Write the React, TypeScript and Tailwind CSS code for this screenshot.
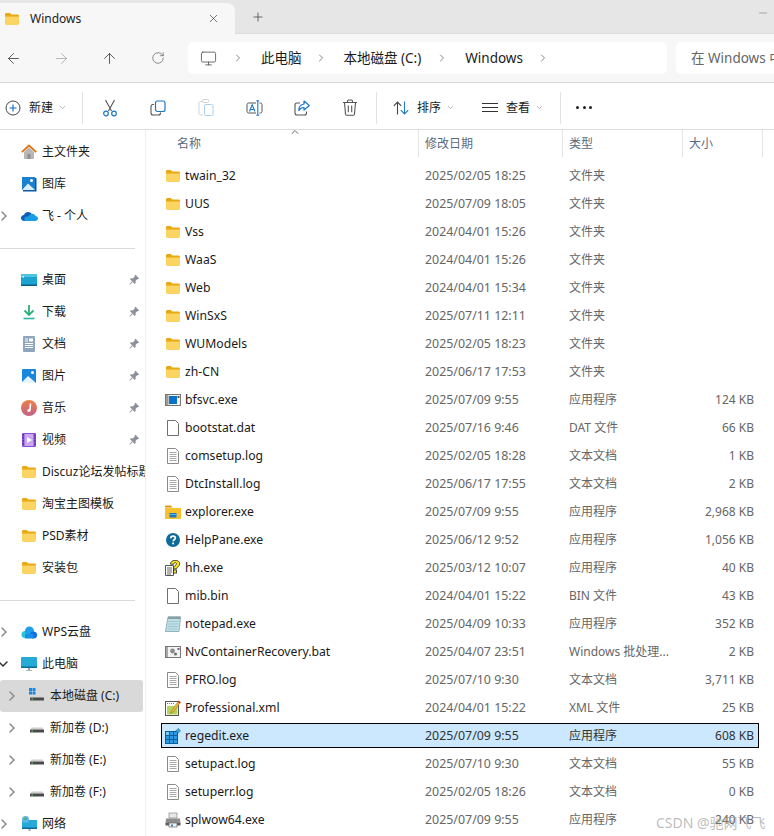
import { ArrowLeft, ArrowRight, ArrowUp, ChevronDown, ChevronRight, Plus, RotateCw, X, Minus, Monitor } from "lucide-react";
import type { ReactNode } from "react";

const font = "font-['Noto_Sans','Noto_Sans_CJK_SC',sans-serif]";

function FolderIcon({ size = 16 }: { size?: number }) {
  return (
    <svg width={size} height={size} viewBox="0 0 16 16">
      <path d="M1 3.500C1 2.700 1.600 2 2.400 2h3.400l1.600 1.500h6.200c.8 0 1.400.6 1.400 1.400V6H1z" fill="#e9a913" />
      <path d="M1 5.500h14v7.100c0 .8-.6 1.400-1.400 1.400H2.400C1.600 14 1 13.400 1 12.600z" fill="#fcd462" />
    </svg>
  );
}

function DocIcon({ lines = false }: { lines?: boolean }) {
  return (
    <svg width="16" height="16" viewBox="0 0 16 16" fill="none">
      <path d="M2.500.5h8l3 3v12h-11z" fill="#fff" stroke={lines ? "#8a8a8a" : "#6f6f6f"} />
      {lines && <path d="M4.500 4.500h7M4.500 6.500h7M4.500 8.500h7M4.500 10.500h7M4.500 12.500h7" stroke="#a8a8a8" />}
    </svg>
  );
}

function ExeIcon() {
  return (
    <svg width="16" height="16" viewBox="0 0 16 16">
      <rect x=".5" y="2.500" width="15" height="11" fill="#f2f2f2" stroke="#777" />
      <rect x="1" y="3" width="2.500" height="10" fill="#9a9a9a" />
      <rect x="4" y="4" width="8" height="8" fill="#0a73c9" />
      <rect x="12.500" y="4" width="2" height="2" fill="#555" />
    </svg>
  );
}

function ExplorerIcon() {
  return (
    <svg width="16" height="16" viewBox="0 0 16 16">
      <path d="M0 2.500C0 2 .4 1.500 1 1.500h5l1.500 2H0z" fill="#d99a0f" />
      <path d="M0 4h16v10c0 .6-.4 1-1 1H1c-.6 0-1-.4-1-1z" fill="#fbc02d" />
      <rect x="4.500" y="9" width="7" height="4.500" rx=".5" fill="#1a78c2" />
      <rect x="4.500" y="10" width="7" height="1" fill="#5cb1ea" />
    </svg>
  );
}

function HelpIcon() {
  return (
    <svg width="16" height="16" viewBox="0 0 16 16">
      <circle cx="8" cy="8" r="7" fill="#0f6a9c" />
      <path d="M5.800 6.200c0-1.300 1-2.100 2.300-2.100s2.200.8 2.200 1.900c0 1.700-2.100 1.700-2.100 3.300" fill="none" stroke="#fff" strokeWidth="1.800" />
      <rect x="7.200" y="10.500" width="1.800" height="1.800" fill="#fff" />
    </svg>
  );
}

function HhIcon() {
  return (
    <svg width="16" height="16" viewBox="0 0 16 16">
      <path d="M.5 5.500h8v10h-8z" fill="#fff" stroke="#555" />
      <path d="M2 8h5M2 10h5M2 12h5M2 14h4" stroke="#666" />
      <path d="M5.500 4.200C5.500 1.800 7.500.3 10 .3c2.600 0 4.800 1.300 4.800 3.500 0 2.800-3.300 2.900-3.300 5H8.400c0-3.300 3.200-3.500 3.200-5 0-.7-.6-1.100-1.500-1.100-1 0-1.500.6-1.500 1.500z" fill="#fbe816" stroke="#222" strokeWidth=".8" />
      <rect x="8.400" y="10" width="3.100" height="3" fill="#fbe816" stroke="#222" strokeWidth=".8" />
    </svg>
  );
}

function NotepadIcon() {
  return (
    <svg width="16" height="16" viewBox="0 0 16 16">
      <path d="M3 1h12.500l-1.500 14.500H.5z" fill="#bfe0e8" stroke="#7fa3ad" strokeWidth=".8" />
      <path d="M3 .5h12.500v2.500H3z" fill="#8c9ea5" />
      <path d="M3.500 5.500h10M3.200 8h10M2.900 10.500h10M2.600 13h10" stroke="#8fbcc9" strokeWidth=".7" />
    </svg>
  );
}

function BatIcon() {
  return (
    <svg width="16" height="16" viewBox="0 0 16 16">
      <rect x=".5" y="2.500" width="15" height="11" fill="#f4f4f4" stroke="#777" />
      <rect x="1" y="3" width="2" height="10" fill="#aaa" />
      <circle cx="7.500" cy="7" r="2.400" fill="#8b8b8b" />
      <circle cx="10.500" cy="10" r="1.600" fill="#6f6f6f" />
      <rect x="12.500" y="4" width="2" height="2" fill="#666" />
    </svg>
  );
}

function XmlIcon() {
  return (
    <svg width="16" height="16" viewBox="0 0 16 16">
      <rect x=".5" y="1.500" width="13" height="14" fill="#fff" stroke="#555" />
      <rect x="2" y="6" width="10.500" height="8.500" fill="#b6d45c" />
      <path d="M2 3.500h7" stroke="#777" strokeDasharray="1 1" />
      <path d="M5.500 13.500l1.200-3L13.600.8l2 1.400-6.900 9.500z" fill="#eeb33a" stroke="#7a5a16" strokeWidth=".4" />
      <path d="M13.600.8l2 1.400-1 1.300-2-1.400z" fill="#c9372c" />
    </svg>
  );
}

function RegIcon() {
  return (
    <svg width="16" height="16" viewBox="0 0 16 16">
      <rect x=".5" y="3.500" width="12" height="12" fill="#2a9be3" stroke="#0d5e9c" />
      <path d="M4.500 3.500v12M8.500 3.500v12M.5 7.500h12M.5 11.500h12" stroke="#0d5e9c" />
      <rect x="1" y="4" width="3" height="3" fill="#7ecbf5" />
      <path d="M13.200 .5l2.300 2.300-2.300 2.300-2.300-2.300z" fill="#4ba6dd" stroke="#1a6ea8" strokeWidth=".7" />
    </svg>
  );
}

function PrinterIcon() {
  return (
    <svg width="16" height="16" viewBox="0 0 16 16">
      <rect x="4" y="1" width="8" height="5" fill="#e8e8e8" stroke="#888" strokeWidth=".7" />
      <path d="M1 6.500h14l.5 5H.5z" fill="#8d8d8d" />
      <rect x=".5" y="11" width="15" height="2.500" fill="#5e5e5e" />
      <rect x="4" y="11" width="8" height="4" fill="#f2f2f2" stroke="#666" strokeWidth=".7" />
      <rect x="6" y="12.500" width="2" height="2" fill="#2a86c9" />
    </svg>
  );
}

function HomeIcon() {
  return (
    <svg width="16" height="16" viewBox="0 0 16 16">
      <path d="M3 8l5-4.500L13 8v6.500c0 .3-.2.500-.5.500h-9c-.3 0-.5-.2-.5-.5z" fill="#b7b7b7" />
      <rect x="6.500" y="10" width="3" height="5" fill="#8d8d8d" />
      <path d="M.8 8.200L8 1.500l7.200 6.700" fill="none" stroke="#e0730f" strokeWidth="1.800" />
    </svg>
  );
}

function GalleryIcon() {
  return (
    <svg width="16" height="16" viewBox="0 0 16 16">
      <rect x="1" y="1" width="13" height="13" fill="#1a80d0" />
      <path d="M14 2h1.500v13.500H2V14h12z" fill="#0c5aa6" />
      <circle cx="10.500" cy="4.500" r="1.500" fill="#fff" />
      <path d="M1 14l6-6.500 7 6.500z" fill="#dbeefa" />
    </svg>
  );
}

function OneDriveIcon() {
  return (
    <svg width="17" height="16" viewBox="0 0 17 16">
      <path d="M3.500 13C1.500 13 0 11.700 0 10s1.300-2.800 3-3c.6-1.900 2.200-3 4.100-3 1.600 0 3 .8 3.700 2.200L8 13z" fill="#0a5fb4" />
      <path d="M3.500 13h10.600c1.600 0 2.900-1 2.900-2.500 0-1.400-1.100-2.400-2.500-2.500-.6-1.500-2-2.300-3.600-2.200-2.300.2-3.100 2-3.900 3-1.500-.6-3.200 0-3.500 1.500-.2.900-.1 2 0 2.700z" fill="#1c9ce5" />
    </svg>
  );
}

function DesktopIcon() {
  return (
    <svg width="16" height="16" viewBox="0 0 16 16">
      <rect x="0" y="2" width="16" height="12" rx="1" fill="#1ba4cf" />
      <path d="M0 3c0-.6.400-1 1-1h14c.6 0 1 .4 1 1v2H0z" fill="#4ec3e2" />
      <rect x="0" y="12.500" width="16" height="1.500" fill="#0a5c86" />
      <rect x="1.500" y="4" width="1.500" height="1.500" fill="#fff" />
    </svg>
  );
}

function DownloadIcon() {
  return (
    <svg width="16" height="16" viewBox="0 0 16 16" fill="none">
      <path d="M8 1v9.500M3.500 6.500L8 11l4.500-4.500" stroke="#2ab27b" strokeWidth="1.800" />
      <path d="M2.500 14.500h11" stroke="#28b6a0" strokeWidth="1.600" />
    </svg>
  );
}

function DocsIcon() {
  return (
    <svg width="16" height="16" viewBox="0 0 16 16">
      <rect x="2" y="0" width="12" height="16" rx="1" fill="#8ea6bf" />
      <rect x="8" y="2.500" width="4" height="3" fill="#fff" />
      <path d="M4 3h3M4 5h3M4 7.500h8M4 9.500h8M4 11.500h8" stroke="#fff" />
    </svg>
  );
}

function PicsIcon() {
  return (
    <svg width="16" height="16" viewBox="0 0 16 16">
      <rect x="1" y="1" width="14" height="14" rx="1" fill="#1a86dc" />
      <circle cx="11.500" cy="4.500" r="1.500" fill="#fff" />
      <path d="M1 14l6-6 7 6v1H1z" fill="#e8f4fc" />
    </svg>
  );
}

function MusicIcon() {
  return (
    <svg width="16" height="16" viewBox="0 0 16 16">
      <defs>
        <linearGradient id="mus" x1="0" y1="0" x2="0" y2="1">
          <stop offset="0" stopColor="#e98145" />
          <stop offset="1" stopColor="#c3618c" />
        </linearGradient>
      </defs>
      <circle cx="8" cy="8" r="8" fill="url(#mus)" />
      <path d="M8.800 3.500h1.500L9.800 10c-.1 1.200-1 2-2 2s-1.600-.6-1.600-1.400c0-1 1-1.600 2-1.400z" fill="#fff" />
    </svg>
  );
}

function VideoIcon() {
  return (
    <svg width="16" height="16" viewBox="0 0 16 16">
      <rect x="1" y="1" width="14" height="14" rx="1" fill="#8d4fdc" />
      <rect x="3.500" y="2" width="9" height="12" fill="#c8a9ef" />
      <path d="M6 5l5 3-5 3z" fill="#fff" />
      <path d="M1.500 3h1.500M1.500 6h1.500M1.500 9h1.500M1.500 12h1.500M13 3h1.500M13 6h1.500M13 9h1.500M13 12h1.500" stroke="#3f1f86" />
    </svg>
  );
}

function WpsCloudIcon() {
  return (
    <svg width="16" height="16" viewBox="0 0 16 16">
      <circle cx="4" cy="10.500" r="3.500" fill="#29c4d6" />
      <circle cx="8.500" cy="7" r="4.500" fill="#1e9fe8" />
      <circle cx="12.500" cy="11" r="3.500" fill="#0f6fe0" />
      <rect x="4" y="10" width="8.500" height="4.500" fill="#1a8ee6" />
    </svg>
  );
}

function PcIcon() {
  return (
    <svg width="16" height="16" viewBox="0 0 16 16">
      <rect x="0" y="1" width="16" height="11" rx="1" fill="#25a9d6" />
      <rect x="0" y="10.500" width="16" height="1.500" fill="#0f6c9a" />
      <rect x="7" y="12" width="2" height="2" fill="#9aa5ab" />
      <rect x="5" y="14" width="6" height="1" fill="#aab4ba" />
    </svg>
  );
}

function DriveIcon({ system = false }: { system?: boolean }) {
  return (
    <svg width="16" height="16" viewBox="0 0 16 16">
      <path d="M1.500 9.500l1-2h11l1 2z" fill={system ? "#d6d6d6" : "#cfcfcf"} />
      <rect x="1" y="9.500" width="14" height="3" rx=".5" fill="#4a4a4a" />
      <rect x="2.500" y="10.500" width="1.500" height="1" fill="#5ee070" />
      {system && (
        <g fill="#1a86dc">
          <rect x="0" y="0" width="3" height="3" />
          <rect x="3.500" y="0" width="3" height="3" />
          <rect x="0" y="3.500" width="3" height="3" />
          <rect x="3.500" y="3.500" width="3" height="3" />
        </g>
      )}
    </svg>
  );
}

function NetworkIcon() {
  return (
    <svg width="16" height="16" viewBox="0 0 16 16">
      <rect x="1" y="4" width="15" height="9" rx=".5" fill="#25a9d6" />
      <rect x="1" y="11.500" width="15" height="1.500" fill="#0f6c9a" />
      <rect x="7.500" y="13" width="2" height="2" fill="#9aa5ab" />
      <circle cx="4.500" cy="3.500" r="3.500" fill="#5cb6e6" />
      <path d="M2.500 2.500l2-1 1.500 1-1.500 2z" fill="#4fae62" />
    </svg>
  );
}

function PinIcon() {
  return (
    <svg width="12" height="12" viewBox="0 0 12 12" fill="#8b9199">
      <path d="M7.500.8l3.700 3.700-1 .8-.7-.3-2 2 .2 2-.9.9L1.900 5.100l.9-.9 2 .2 2-2-.3-.7z" />
      <path d="M3.600 7.400L.8 11.200l3.800-2.800z" />
    </svg>
  );
}

function NewIcon() {
  return (
    <svg width="16" height="16" viewBox="0 0 16 16" fill="none">
      <circle cx="8" cy="8" r="7" stroke="#444" />
      <path d="M8 4.500v7M4.500 8h7" stroke="#0a6cc4" strokeWidth="1.100" />
    </svg>
  );
}

function CutIcon() {
  return (
    <svg width="16" height="18" viewBox="0 0 16 18" fill="none">
      <path d="M3.500 1l6 11M12.500 1l-6 11" stroke="#555" strokeWidth="1.100" />
      <circle cx="4" cy="14.500" r="2.300" stroke="#1d77c9" strokeWidth="1.200" />
      <circle cx="12" cy="14.500" r="2.300" stroke="#1d77c9" strokeWidth="1.200" />
    </svg>
  );
}

function CopyIcon() {
  return (
    <svg width="16" height="16" viewBox="0 0 16 16" fill="none">
      <rect x="5.500" y="1" width="9.500" height="10.500" rx="2" stroke="#1d77c9" strokeWidth="1.200" />
      <path d="M4 4.500H3c-1.100 0-2 .9-2 2V13c0 1.100.9 2 2 2h5.500c1.100 0 2-.9 2-2v-.5" stroke="#555" strokeWidth="1.100" />
    </svg>
  );
}

function PasteIcon() {
  return (
    <svg width="16" height="17" viewBox="0 0 16 17" fill="none">
      <path d="M5 2.500H2.500c-.8 0-1.500.7-1.500 1.500v10.500c0 .8.7 1.500 1.500 1.500H5" stroke="#cfd3d6" />
      <rect x="4.500" y=".5" width="6" height="3" rx="1" stroke="#cfd3d6" />
      <rect x="6.500" y="5.500" width="8.500" height="11" rx="1.500" stroke="#a9d0ee" />
    </svg>
  );
}

function RenameIcon() {
  return (
    <svg width="17" height="16" viewBox="0 0 17 16" fill="none">
      <path d="M10 3H2.500C1.700 3 1 3.700 1 4.500v7c0 .8.7 1.500 1.500 1.500H10M13.500 3h1c.8 0 1.500.7 1.500 1.500v7c0 .8-.7 1.500-1.500 1.500h-1" stroke="#555" />
      <path d="M3.500 11.500L6.200 4.800 9 11.500M4.500 9.500h3.500" stroke="#1d77c9" strokeWidth="1.100" />
      <path d="M11.800 1v14M10.300.8h3M10.300 15.200h3" stroke="#1d77c9" strokeWidth="1.100" />
    </svg>
  );
}

function ShareIcon() {
  return (
    <svg width="16" height="16" viewBox="0 0 16 16" fill="none">
      <path d="M6 3H3C1.900 3 1 3.900 1 5v8c0 1.100.9 2 2 2h7.500c1.100 0 2-.9 2-2v-1.500" stroke="#555" strokeWidth="1.100" />
      <path d="M10 1l5.300 4.500L10 10V7.500c-2.500 0-4 .8-5.200 3 0-4 2-6 5.200-6.500z" stroke="#1d77c9" strokeWidth="1.200" strokeLinejoin="round" />
    </svg>
  );
}

function TrashIcon() {
  return (
    <svg width="16" height="17" viewBox="0 0 16 17" fill="none" stroke="#555" strokeWidth="1.100">
      <path d="M1 3.500h14M5.500 3.500V2.200c0-.7.5-1.200 1.200-1.200h2.600c.7 0 1.200.5 1.200 1.200v1.300" />
      <path d="M2.500 3.500l1 11.500c.1.700.6 1.200 1.300 1.200h6.400c.7 0 1.200-.5 1.300-1.200l1-11.500" />
      <path d="M6.300 6.500v6.800M9.700 6.500v6.800" />
    </svg>
  );
}

function SortIcon() {
  return (
    <svg width="16" height="14" viewBox="0 0 16 14" fill="none" strokeWidth="1.100">
      <path d="M4.500 13.500V1M.8 4.800L4.500 1l3.700 3.800" stroke="#444" />
      <path d="M11.500.5V13M7.800 9.200L11.500 13l3.700-3.800" stroke="#1d77c9" />
    </svg>
  );
}

function Sep({ className = "" }: { className?: string }) {
  return <div className={`h-[32px] w-px bg-[#e2e2e2] ${className}`} />;
}

type NavEntry = { icon: ReactNode; label: string; chevron?: "right" | "down"; pin?: boolean; indent?: boolean; active?: boolean };

const navTop: NavEntry[] = [
  { icon: <HomeIcon />, label: "主文件夹" },
  { icon: <GalleryIcon />, label: "图库" },
  { icon: <OneDriveIcon />, label: "飞 - 个人", chevron: "right" },
];

const navPinned: NavEntry[] = [
  { icon: <DesktopIcon />, label: "桌面", pin: true },
  { icon: <DownloadIcon />, label: "下载", pin: true },
  { icon: <DocsIcon />, label: "文档", pin: true },
  { icon: <PicsIcon />, label: "图片", pin: true },
  { icon: <MusicIcon />, label: "音乐", pin: true },
  { icon: <VideoIcon />, label: "视频", pin: true },
  { icon: <FolderIcon />, label: "Discuz论坛发帖标题" },
  { icon: <FolderIcon />, label: "淘宝主图模板" },
  { icon: <FolderIcon />, label: "PSD素材" },
  { icon: <FolderIcon />, label: "安装包" },
];

const navDrives: NavEntry[] = [
  { icon: <WpsCloudIcon />, label: "WPS云盘", chevron: "right" },
  { icon: <PcIcon />, label: "此电脑", chevron: "down" },
  { icon: <DriveIcon system />, label: "本地磁盘 (C:)", chevron: "right", indent: true, active: true },
  { icon: <DriveIcon />, label: "新加卷 (D:)", chevron: "right", indent: true },
  { icon: <DriveIcon />, label: "新加卷 (E:)", chevron: "right", indent: true },
  { icon: <DriveIcon />, label: "新加卷 (F:)", chevron: "right", indent: true },
  { icon: <NetworkIcon />, label: "网络", chevron: "right" },
];

type FileRow = { icon: ReactNode; name: string; date: string; type: string; size?: string; selected?: boolean };

const folder = <FolderIcon />;
const doc = <DocIcon />;
const log = <DocIcon lines />;

const files: FileRow[] = [
  { icon: folder, name: "twain_32", date: "2025/02/05 18:25", type: "文件夹" },
  { icon: folder, name: "UUS", date: "2025/07/09 18:05", type: "文件夹" },
  { icon: folder, name: "Vss", date: "2024/04/01 15:26", type: "文件夹" },
  { icon: folder, name: "WaaS", date: "2024/04/01 15:26", type: "文件夹" },
  { icon: folder, name: "Web", date: "2024/04/01 15:34", type: "文件夹" },
  { icon: folder, name: "WinSxS", date: "2025/07/11 12:11", type: "文件夹" },
  { icon: folder, name: "WUModels", date: "2025/02/05 18:23", type: "文件夹" },
  { icon: folder, name: "zh-CN", date: "2025/06/17 17:53", type: "文件夹" },
  { icon: <ExeIcon />, name: "bfsvc.exe", date: "2025/07/09 9:55", type: "应用程序", size: "124 KB" },
  { icon: doc, name: "bootstat.dat", date: "2025/07/16 9:46", type: "DAT 文件", size: "66 KB" },
  { icon: log, name: "comsetup.log", date: "2025/02/05 18:28", type: "文本文档", size: "1 KB" },
  { icon: log, name: "DtcInstall.log", date: "2025/06/17 17:55", type: "文本文档", size: "2 KB" },
  { icon: <ExplorerIcon />, name: "explorer.exe", date: "2025/07/09 9:55", type: "应用程序", size: "2,968 KB" },
  { icon: <HelpIcon />, name: "HelpPane.exe", date: "2025/06/12 9:52", type: "应用程序", size: "1,056 KB" },
  { icon: <HhIcon />, name: "hh.exe", date: "2025/03/12 10:07", type: "应用程序", size: "40 KB" },
  { icon: doc, name: "mib.bin", date: "2024/04/01 15:22", type: "BIN 文件", size: "43 KB" },
  { icon: <NotepadIcon />, name: "notepad.exe", date: "2025/04/09 10:33", type: "应用程序", size: "352 KB" },
  { icon: <BatIcon />, name: "NvContainerRecovery.bat", date: "2025/04/07 23:51", type: "Windows 批处理...", size: "2 KB" },
  { icon: log, name: "PFRO.log", date: "2025/07/10 9:30", type: "文本文档", size: "3,711 KB" },
  { icon: <XmlIcon />, name: "Professional.xml", date: "2024/04/01 15:22", type: "XML 文件", size: "25 KB" },
  { icon: <RegIcon />, name: "regedit.exe", date: "2025/07/09 9:55", type: "应用程序", size: "608 KB", selected: true },
  { icon: log, name: "setupact.log", date: "2025/07/10 9:30", type: "文本文档", size: "55 KB" },
  { icon: log, name: "setuperr.log", date: "2025/02/05 18:26", type: "文本文档", size: "0 KB" },
  { icon: <PrinterIcon />, name: "splwow64.exe", date: "2025/07/09 9:55", type: "应用程序", size: "240 KB" },
];

function NavItem({ item }: { item: NavEntry }) {
  return (
    <div className={`flex h-8 shrink-0 items-center ${item.active ? "mr-[2px] rounded-[3px] bg-[#d9d9d9]" : ""}`}>
      <span className={`flex w-[21px] shrink-0 items-center ${item.indent ? "pl-[4px]" : "-ml-[4px] mr-[4px]"}`}>
        {item.chevron === "right" && <ChevronRight size={16} strokeWidth={2.200} className="text-[#8a8a8a]" />}
        {item.chevron === "down" && <ChevronDown size={16} strokeWidth={2.200} className="ml-[-1px] text-[#333]" />}
      </span>
      <span className={`flex w-[21px] shrink-0 ${item.indent ? "ml-[8px]" : ""}`}>{item.icon}</span>
      <span className="min-w-0 flex-1 overflow-hidden whitespace-nowrap text-[12px] text-[#1a1a1a]">{item.label}</span>
      {item.pin && <span className="mr-[5px] flex"><PinIcon /></span>}
    </div>
  );
}

function ToolButton({ children }: { children: ReactNode }) {
  return <div className="flex w-[48px] items-center justify-center">{children}</div>;
}

export default function App() {
  return (
    <div className={`flex h-[836px] w-[774px] flex-col overflow-hidden bg-white ${font}`}>
      {/* tab strip */}
      <div className="flex h-[34px] shrink-0 items-end border-b border-[#dcdcdc] bg-[#e6e6e6]">
        <div className="-mb-px flex h-[31px] w-[235px] items-center rounded-tr-[8px] bg-[#f7f7f7]">
          <span className="ml-[4px] flex"><FolderIcon /></span>
          <span className="ml-[10px] flex-1 text-[12px] text-[#1a1a1a]">Windows</span>
          <X size={13} strokeWidth={1.200} className="mr-[15px] text-[#333]" />
        </div>
        <div className="mb-[6px] ml-[16px] flex flex-1 items-center justify-between pr-[5px]">
          <Plus size={14} strokeWidth={1.200} className="text-[#333]" />
          <Minus size={12} strokeWidth={1} className="mb-[8px] text-[#666]" />
        </div>
      </div>

      {/* address bar */}
      <div className="flex h-[49px] shrink-0 items-center border-b border-[#d9d9d9] bg-[#f7f7f7] pl-[5px]">
        <ArrowLeft size={17} strokeWidth={1.100} className="text-[#333]" />
        <ArrowRight size={17} strokeWidth={1.100} className="ml-[31px] text-[#a6a6a6]" />
        <ArrowUp size={17} strokeWidth={1.100} className="ml-[31px] text-[#333]" />
        <RotateCw size={14} strokeWidth={1.100} className="ml-[33px] text-[#555]" />
        <div className="ml-[23px] flex h-[32px] w-[479px] items-center rounded-[5px] bg-white pl-[12px] text-[13.5px] text-[#1a1a1a]">
          <Monitor size={17} strokeWidth={1.200} className="text-[#555]" />
          <ChevronRight size={12} strokeWidth={1.300} className="ml-[15px] text-[#444]" />
          <span className="ml-[17px]">此电脑</span>
          <ChevronRight size={12} strokeWidth={1.300} className="ml-[13px] text-[#444]" />
          <span className="ml-[17px]">本地磁盘 (C:)</span>
          <ChevronRight size={12} strokeWidth={1.300} className="ml-[15px] text-[#444]" />
          <span className="ml-[17px]">Windows</span>
          <ChevronRight size={12} strokeWidth={1.300} className="ml-[14px] text-[#444]" />
        </div>
        <div className="ml-[9px] flex h-[32px] flex-1 items-center overflow-hidden whitespace-nowrap rounded-l-[5px] bg-white pl-[15px] text-[13.5px] text-[#666]">
          在 Windows 中搜索
        </div>
      </div>

      {/* command bar */}
      <div className="flex h-[47px] shrink-0 items-center border-b border-[#dcdcdc] pt-[3px] text-[12px] text-[#1a1a1a]">
        <span className="ml-[5px] flex"><NewIcon /></span>
        <span className="ml-[8px]">新建</span>
        <ChevronDown size={9} className="ml-[5px] text-[#999]" />
        <Sep className="ml-[15px]" />
        <div className="ml-[3px] flex h-full items-stretch">
          <ToolButton><CutIcon /></ToolButton>
          <ToolButton><CopyIcon /></ToolButton>
          <ToolButton><PasteIcon /></ToolButton>
          <ToolButton><RenameIcon /></ToolButton>
          <ToolButton><ShareIcon /></ToolButton>
          <ToolButton><TrashIcon /></ToolButton>
        </div>
        <Sep className="ml-[2px]" />
        <span className="ml-[16px] flex"><SortIcon /></span>
        <span className="ml-[8px]">排序</span>
        <ChevronDown size={9} className="ml-[5px] text-[#999]" />
        <span className="ml-[27px] flex w-[16px] flex-col gap-[3px]">
          <span className="h-px bg-[#333]" />
          <span className="h-px bg-[#333]" />
          <span className="h-px bg-[#333]" />
        </span>
        <span className="ml-[8px]">查看</span>
        <ChevronDown size={9} className="ml-[5px] text-[#999]" />
        <Sep className="ml-[16px]" />
        <span className="ml-[15px] flex w-[16px] justify-between">
          <span className="h-[3px] w-[3px] rounded-full bg-[#222]" />
          <span className="h-[3px] w-[3px] rounded-full bg-[#222]" />
          <span className="h-[3px] w-[3px] rounded-full bg-[#222]" />
        </span>
      </div>

      <div className="flex min-h-0 flex-1">
        {/* sidebar */}
        <aside className="flex w-[146px] shrink-0 flex-col overflow-hidden border-r border-[#eeeeee] pt-[6px]">
          {navTop.map((item) => <NavItem key={item.label} item={item} />)}
          <div className="mr-[10px] mb-[15px] mt-[16px] h-px shrink-0 bg-[#d9d9d9]" />
          {navPinned.map((item) => <NavItem key={item.label} item={item} />)}
          <div className="mr-[10px] mb-[15px] mt-[16px] h-px shrink-0 bg-[#d9d9d9]" />
          {navDrives.map((item) => <NavItem key={item.label} item={item} />)}
        </aside>

        {/* file list */}
        <main className="min-w-0 flex-1 overflow-hidden">
          <div className="flex h-[27px] items-start text-[12px] text-[#5a6b80]">
            <div className="relative flex h-full w-[273px] items-center border-r border-[#e5e5e5] pl-[31px]">
              名称
              <ChevronDown size={12} className="absolute left-[143px] top-[-4px] rotate-180 text-[#666]" />
            </div>
            <div className="flex h-full w-[144px] items-center border-r border-[#e5e5e5] pl-[6px]">修改日期</div>
            <div className="flex h-full w-[120px] items-center border-r border-[#e5e5e5] pl-[6px]">类型</div>
            <div className="flex h-full w-[80px] items-center border-r border-[#e5e5e5] pl-[6px]">大小</div>
          </div>
          <div className="flex flex-col gap-[3px] pl-[15px] pt-[6px] text-[12px]">
            {files.map((f) => (
              <div
                key={f.name}
                className={`flex h-[25px] w-[598px] shrink-0 items-center border pt-[2px] ${f.selected ? "border-black bg-[#cce8ff]" : "border-transparent"}`}
              >
                <span className="ml-[3px] flex w-[20px] shrink-0 -translate-y-px">{f.icon}</span>
                <span className="w-[240px] shrink-0 text-[12.2px] text-[#1a1a1a]">{f.name}</span>
                <span className={`w-[144px] shrink-0 text-[12.4px] ${f.selected ? "text-[#333]" : "text-[#666]"}`}>{f.date}</span>
                <span className={`w-[100px] shrink-0 -translate-y-px whitespace-nowrap ${f.selected ? "text-[#333]" : "text-[#666]"}`}>{f.type}</span>
                <span className={`flex-1 -translate-y-px pr-[4px] text-right ${f.selected ? "text-[#333]" : "text-[#666]"}`}>{f.size}</span>
              </div>
            ))}
          </div>
        </main>
      </div>

      {/* blog watermark */}
      <span className="absolute left-[656px] top-[812px] text-[14px] text-[#8f8f8f]/60">CSDN @驰网飞飞</span>
    </div>
  );
}
